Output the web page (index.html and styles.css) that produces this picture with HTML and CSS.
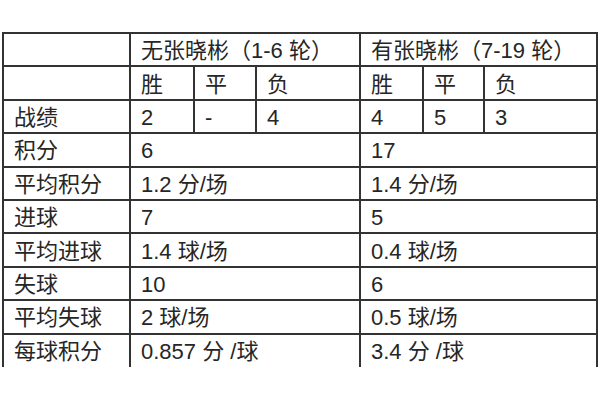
FILE: index.html
```html
<!DOCTYPE html>
<html lang="zh">
<head>
<meta charset="utf-8">
<title>张晓彬战绩</title>
<link rel="stylesheet" href="styles.css">
</head>
<body>
<table class="stats">
  <colgroup>
    <col class="c-label">
    <col class="c-w1">
    <col class="c-d1">
    <col class="c-l1">
    <col class="c-w2">
    <col class="c-d2">
    <col class="c-l2">
  </colgroup>
  <tr><td></td><td colspan="3">无张晓彬（1-6 轮）</td><td colspan="3">有张晓彬（7-19 轮）</td></tr>
  <tr><td></td><td>胜</td><td>平</td><td>负</td><td>胜</td><td>平</td><td>负</td></tr>
  <tr><td>战绩</td><td>2</td><td>-</td><td>4</td><td>4</td><td>5</td><td>3</td></tr>
  <tr><td>积分</td><td colspan="3">6</td><td colspan="3">17</td></tr>
  <tr><td>平均积分</td><td colspan="3">1.2 分/场</td><td colspan="3">1.4 分/场</td></tr>
  <tr><td>进球</td><td colspan="3">7</td><td colspan="3">5</td></tr>
  <tr><td>平均进球</td><td colspan="3">1.4 球/场</td><td colspan="3">0.4 球/场</td></tr>
  <tr><td>失球</td><td colspan="3">10</td><td colspan="3">6</td></tr>
  <tr><td>平均失球</td><td colspan="3">2 球/场</td><td colspan="3">0.5 球/场</td></tr>
  <tr class="last"><td>每球积分</td><td colspan="3">0.857 分 /球</td><td colspan="3">3.4 分 /球</td></tr>
</table>
</body>
</html>
```
FILE: styles.css
```css
html, body {
  margin: 0;
  padding: 0;
  background: #fff;
}
body {
  padding: 32px 0 0 2px;
  font-family: "Liberation Sans", "Noto Sans CJK SC", sans-serif;
  color: #262626;
}
.stats {
  border-collapse: collapse;
  table-layout: fixed;
  width: 596px;
}
.c-label { width: 127px; }
.c-w1 { width: 64px; }
.c-d1 { width: 62px; }
.c-l1 { width: 104px; }
.c-w2 { width: 63px; }
.c-d2 { width: 61px; }
.c-l2 { width: 113px; }
.stats tr { height: 33.4px; }
.stats td {
  border: 2px solid #333;
  padding: 3px 0 0 10px;
  font-size: 22px;
  line-height: 28px;
  vertical-align: middle;
  white-space: nowrap;
  overflow: hidden;
}
.stats tr.last td {
  border-bottom: none;
}
```
